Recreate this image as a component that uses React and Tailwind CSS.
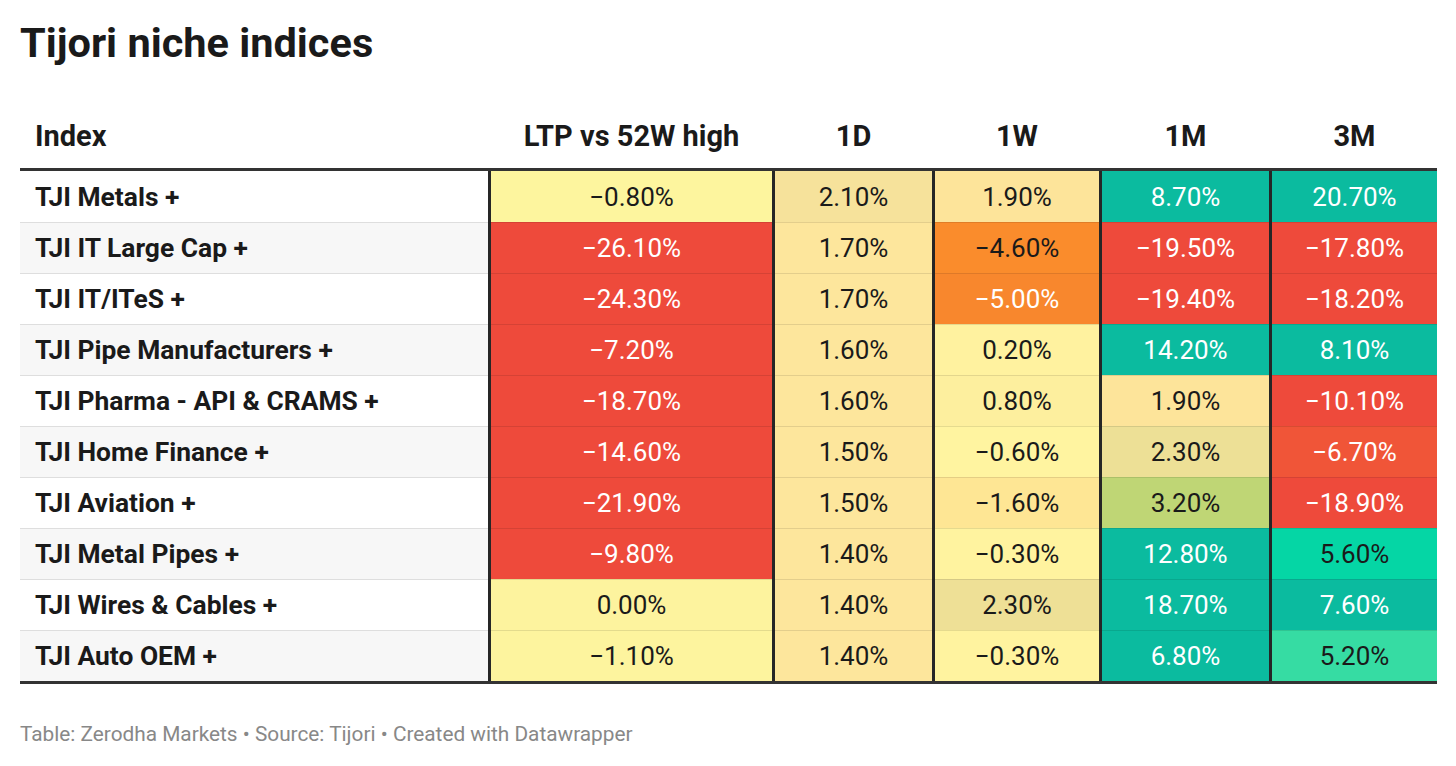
import React from "react";

const RED = "bg-[#ee4a3b] text-white";
const TEAL = "bg-[#0bbb9f] text-white";
const D1 = "bg-[#fde69c] text-[#1a1a1a]";

const rows = [
  ["TJI Metals +", [
    ["−0.80%", "bg-[#fdf59e] text-[#1a1a1a]"],
    ["2.10%", "bg-[#f6e29b] text-[#1a1a1a]"],
    ["1.90%", "bg-[#fde49a] text-[#1a1a1a]"],
    ["8.70%", TEAL],
    ["20.70%", TEAL],
  ]],
  ["TJI IT Large Cap +", [
    ["−26.10%", RED],
    ["1.70%", D1],
    ["−4.60%", "bg-[#fa8c2c] text-[#1a1a1a]"],
    ["−19.50%", RED],
    ["−17.80%", RED],
  ]],
  ["TJI IT/ITeS +", [
    ["−24.30%", RED],
    ["1.70%", D1],
    ["−5.00%", "bg-[#f8872d] text-white"],
    ["−19.40%", RED],
    ["−18.20%", RED],
  ]],
  ["TJI Pipe Manufacturers +", [
    ["−7.20%", RED],
    ["1.60%", D1],
    ["0.20%", "bg-[#fff29f] text-[#1a1a1a]"],
    ["14.20%", TEAL],
    ["8.10%", TEAL],
  ]],
  ["TJI Pharma - API & CRAMS +", [
    ["−18.70%", RED],
    ["1.60%", D1],
    ["0.80%", "bg-[#fdef9e] text-[#1a1a1a]"],
    ["1.90%", "bg-[#fde49a] text-[#1a1a1a]"],
    ["−10.10%", RED],
  ]],
  ["TJI Home Finance +", [
    ["−14.60%", RED],
    ["1.50%", D1],
    ["−0.60%", "bg-[#fff4a0] text-[#1a1a1a]"],
    ["2.30%", "bg-[#ede096] text-[#1a1a1a]"],
    ["−6.70%", "bg-[#f05538] text-white"],
  ]],
  ["TJI Aviation +", [
    ["−21.90%", RED],
    ["1.50%", D1],
    ["−1.60%", "bg-[#fee694] text-[#1a1a1a]"],
    ["3.20%", "bg-[#bfd675] text-[#1a1a1a]"],
    ["−18.90%", RED],
  ]],
  ["TJI Metal Pipes +", [
    ["−9.80%", RED],
    ["1.40%", D1],
    ["−0.30%", "bg-[#fff39f] text-[#1a1a1a]"],
    ["12.80%", TEAL],
    ["5.60%", "bg-[#05d6a5] text-[#1a1a1a]"],
  ]],
  ["TJI Wires & Cables +", [
    ["0.00%", "bg-[#fdf39e] text-[#1a1a1a]"],
    ["1.40%", D1],
    ["2.30%", "bg-[#eee096] text-[#1a1a1a]"],
    ["18.70%", TEAL],
    ["7.60%", TEAL],
  ]],
  ["TJI Auto OEM +", [
    ["−1.10%", "bg-[#fdf49e] text-[#1a1a1a]"],
    ["1.40%", D1],
    ["−0.30%", "bg-[#fff39f] text-[#1a1a1a]"],
    ["6.80%", TEAL],
    ["5.20%", "bg-[#36dca3] text-[#1a1a1a]"],
  ]],
];

const GRID = "grid grid-cols-[468px_284px_160px_167px_170px_168px]";

export default function App() {
  return (
    <div className="w-[1456px] h-[766px] bg-white font-[Roboto,sans-serif] text-[#1a1a1a] pt-[22px] px-[20px] overflow-hidden">
      <h1 className="text-[41.5px] leading-[42px] font-bold">Tijori niche indices</h1>
      <div className="mt-[58px] w-[1417px]">
        <div className={`${GRID} border-b-[3px] border-[#333333] pb-[17px] text-[29px] leading-[29px] font-bold`}>
          <div className="pl-[15px]">Index</div>
          <div className="text-center pl-[3px]">LTP vs 52W high</div>
          <div className="text-center pl-[3px]">1D</div>
          <div className="text-center pl-[3px]">1W</div>
          <div className="text-center pl-[3px]">1M</div>
          <div className="text-center pl-[3px]">3M</div>
        </div>
        <div className="border-b-[3px] border-[#333333]">
          {rows.map(([name, cells], i) => (
            <div key={name} className={`${GRID} h-[51px]`}>
              <div
                className={`flex items-center pl-[15px] font-bold text-[26.4px] leading-[26px] ${
                  i % 2 ? "bg-[#f7f7f7]" : "bg-white"
                } ${i > 0 ? "border-t border-[#dedede]" : ""}`}
              >
                {name}
              </div>
              {cells.map(([v, cls], j) => (
                <div key={j} className="border-l-[3px] border-[#262626] flex">
                  <div
                    className={`flex-1 flex items-center justify-center text-[26px] leading-[26px] ${cls} ${
                      i > 0 ? "border-t border-black/10" : ""
                    }`}
                  >
                    {v}
                  </div>
                </div>
              ))}
            </div>
          ))}
        </div>
      </div>
      <div className="mt-[40px] text-[20.8px] leading-[21px] text-[#888888]">
        Table: Zerodha Markets • Source: Tijori • Created with Datawrapper
      </div>
    </div>
  );
}
